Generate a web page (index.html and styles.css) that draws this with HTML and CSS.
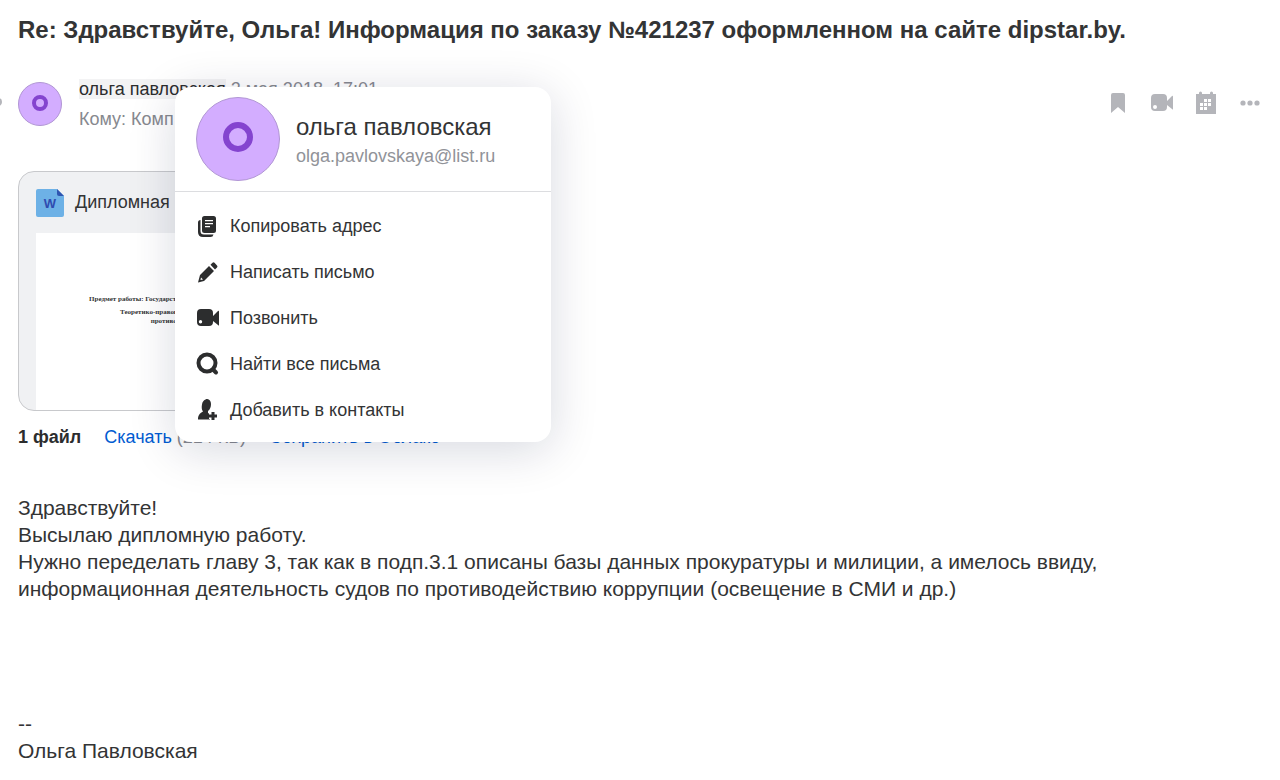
FILE: index.html
```html
<!DOCTYPE html>
<html lang="ru">
<head>
    <meta charset="UTF-8">
    <meta name="viewport" content="width=device-width, initial-scale=1.0">
    <title>Письмо</title>
    <link rel="stylesheet" href="styles.css">
</head>
<body>
    <main class="letter">
        <h1>Re: Здравствуйте, Ольга! Информация по заказу №421237 оформленном на сайте dipstar.by.</h1>

        <header class="letter-head">
            <span class="read-dot"></span>
            <div class="avatar">
                <svg viewBox="0 0 42 42"><circle cx="21" cy="20" r="6"/></svg>
            </div>
            <div class="people">
                <div class="from"><a class="sender" href="#">ольга павловская</a> <time>2 мая 2018, 17:01</time></div>
                <div class="to">Кому: Комп</div>
            </div>
            <div class="tools">
                <button type="button" aria-label="Закладка">
                    <svg viewBox="0 0 24 24"><path d="M5 4a2 2 0 0 1 2-2h10a2 2 0 0 1 2 2v18l-7-6-7 6z"/></svg>
                </button>
                <button type="button" aria-label="Звонок">
                    <svg viewBox="0 0 24 24"><path fill-rule="evenodd" d="M5 3h8q4 0 4 4v3l5-5q1-1 1 1v12q0 1-1 0l-5-4v2q0 4-4 4H5q-4 0-4-4V7q0-4 4-4zM5 14a2 2 0 1 0 0 4 2 2 0 0 0 0-4z"/></svg>
                </button>
                <button type="button" aria-label="Календарь">
                    <svg viewBox="0 0 24 24"><path fill-rule="evenodd" d="M2 3h3V2a1.500 1.500 0 0 1 3 0v1h8V2a1.500 1.500 0 0 1 3 0v1h3v20H2zM14 8v3h3V8zM10 8v3h3V8zM6 12v3h3v-3zM10 12v3h3v-3zM14 12v3h3v-3zM6 16v3h3v-3zM10 16v3h3v-3z"/></svg>
                </button>
                <button type="button" aria-label="Ещё">
                    <svg viewBox="0 0 24 24"><circle cx="5" cy="12" r="2.600"/><circle cx="12" cy="12" r="2.600"/><circle cx="19" cy="12" r="2.600"/></svg>
                </button>
            </div>

            <div class="popup">
                <div class="contact">
                    <div class="avatar avatar-big">
                        <svg viewBox="0 0 82 82"><circle cx="41" cy="39" r="12"/></svg>
                    </div>
                    <div class="contact-info">
                        <div class="contact-name">ольга павловская</div>
                        <div class="contact-mail">olga.pavlovskaya@list.ru</div>
                    </div>
                </div>
                <div class="menu">
                    <button type="button">
                        <svg viewBox="0 0 24 24"><path fill-rule="evenodd" d="M8.500 2h9q2.500 0 2.500 2.500v12q0 2.500-2.500 2.500h-9Q6 19 6 16.500v-12Q6 2 8.500 2zM9 6v1.300h8V6zM9 9v1.300h8V9zM9 12v1.300h5V12z"/><path d="M4.500 6v11q0 3.500 3.500 3.500h9.500Q17 23 14.500 23H7q-5 0-5-5V8.500Q2 6 4.500 6z"/></svg>
                        Копировать адрес
                    </button>
                    <button type="button">
                        <svg viewBox="0 0 24 24"><path fill-rule="evenodd" d="M13 6l5 5L8 21l-6 1.500 2-7.500zM5 17.500L4.500 20l2.500-.6z"/><path d="M14.500 4.800l2-2q1-1 2 0L21 5.500q1 1 0 2l-2 2z"/></svg>
                        Написать письмо
                    </button>
                    <button type="button">
                        <svg viewBox="0 0 24 24"><path fill-rule="evenodd" d="M5 3h8q4 0 4 4v3l5-5q1-1 1 1v13q0 1-1 0l-5-4v1q0 4-4 4H5q-4 0-4-4V7q0-4 4-4zM4.500 14a1.700 1.700 0 1 0 0 3.400 1.700 1.700 0 0 0 0-3.400z"/></svg>
                        Позвонить
                    </button>
                    <button type="button">
                        <svg viewBox="0 0 24 24"><circle class="line" cx="11" cy="11" r="8.500"/><path class="line" d="M17 17.500l3 3"/></svg>
                        Найти все письма
                    </button>
                    <button type="button">
                        <svg viewBox="0 0 24 24"><path d="M9.500 1.500C12.500 0 15 2.500 15 6c0 3-1 5.500-3 7v2l2 1v5.500H2c0-4 1.500-6 5-8C5.500 11.500 5.500 9 6 6.500c.3-2.500 1.500-4 3.500-5z"/><path class="halo" d="M17 14v8M13 18h8"/><path class="plus" d="M17 14v8M13 18h8"/></svg>
                        Добавить в контакты
                    </button>
                </div>
            </div>
        </header>

        <section class="files">
            <div class="file">
                <div class="file-name">
                    <svg viewBox="0 0 28 28"><path fill="#6db1e6" d="M2 0h19l7 7v19a2 2 0 0 1-2 2H2a2 2 0 0 1-2-2V2a2 2 0 0 1 2-2z"/><path fill="#2f55b0" d="M21 0l7 7h-5q-2 0-2-2z"/><text x="14" y="19">W</text></svg>
                    Дипломная
                </div>
                <div class="preview">
                    <p class="preview-first">Предмет работы: Государственная служба и управление</p>
                    <p>Теоретико-правовые основы работы</p>
                    <p>противодействия</p>
                </div>
            </div>
            <div class="file-links">
                <b>1 файл</b>
                <span><a href="#">Скачать</a> (214 КБ)</span>
                <a href="#">Сохранить в Облако</a>
            </div>
        </section>

        <article class="text">
            <p>Здравствуйте!</p>
            <p>Высылаю дипломную работу.</p>
            <p>Нужно переделать главу 3, так как в подп.3.1 описаны базы данных прокуратуры и милиции, а имелось ввиду, информационная деятельность судов по противодействию коррупции (освещение в СМИ и др.)</p>
            <p class="signature">--<br>Ольга Павловская</p>
        </article>
    </main>
</body>
</html>
```
FILE: styles.css
```css
* {
    box-sizing: border-box;
}

body {
    margin: 0;
    font-family: "Liberation Sans", Arial, sans-serif;
    font-size: 18px;
    color: #333435;
    background-color: #fff;
}

h1, p {
    margin: 0;
}

h1 {
    font-size: 24px;
    line-height: 28px;
}

a {
    color: #005bd1;
    text-decoration: none;
}

button {
    border: none;
    padding: 0;
    background: none;
    font: inherit;
    color: inherit;
    cursor: pointer;
}

.letter {
    padding: 16px 18px;
}

.letter-head {
    position: relative;
    display: flex;
    align-items: flex-start;
    margin-top: 34px;
    padding-top: 4px;
}

.read-dot {
    position: absolute;
    left: -24px;
    top: 20px;
    width: 8px;
    height: 8px;
    border-radius: 50%;
    background-color: #b4b5ba;
}

.avatar {
    flex: none;
    width: 44px;
    height: 44px;
    border: 1px solid #b196d4;
    border-radius: 50%;
    background-color: #d3adff;
}

.avatar svg {
    display: block;
    width: 100%;
    height: 100%;
    fill: none;
    stroke: #8444cf;
    stroke-width: 4;
}

.people {
    flex: 1;
    margin-left: 17px;
    margin-top: -3px;
    line-height: 20px;
    color: #87898f;
}

.sender {
    display: inline-block;
    color: #2c2d2e;
    background-color: #f3f3f4;
}

.to {
    margin-top: 10px;
}

.tools {
    display: flex;
    gap: 20px;
    margin-top: 9px;
}

.tools svg {
    display: block;
    width: 24px;
    height: 24px;
    fill: #b4b5ba;
}

/* contact popup */
.popup {
    position: absolute;
    z-index: 1;
    left: 157px;
    top: 9px;
    width: 376px;
    border-radius: 16px;
    background-color: #fff;
    box-shadow: 0 8px 48px rgba(0, 16, 61, 0.16);
}

.contact {
    display: flex;
    align-items: center;
    gap: 16px;
    padding: 10px 21px;
    border-bottom: 1px solid #dcdde0;
}

.contact-info {
    padding-top: 4px;
}

.avatar-big {
    width: 84px;
    height: 84px;
}

.avatar-big svg {
    stroke-width: 6;
}

.contact-name {
    font-size: 24px;
    line-height: 30px;
}

.contact-mail {
    line-height: 28px;
    color: #919399;
}

.menu {
    padding: 11px 0 9px;
}

.menu button {
    display: flex;
    align-items: center;
    gap: 10px;
    width: 100%;
    height: 46px;
    padding: 0 21px;
}

.menu svg {
    width: 24px;
    height: 24px;
    fill: #2c2d2e;
}

.menu .line,
.menu .plus,
.menu .halo {
    fill: none;
    stroke: #2c2d2e;
    stroke-width: 3;
}

.menu .line {
    stroke-width: 4;
    stroke-linecap: round;
}

.menu .halo {
    stroke: #fff;
    stroke-width: 6;
}

/* attachments */
.files {
    margin-top: 42px;
}

.file {
    width: 320px;
    height: 240px;
    padding: 0 17px;
    border: 1px solid #c8c9cc;
    border-radius: 16px;
    background-color: #f0f1f3;
    overflow: hidden;
}

.file-name {
    display: flex;
    align-items: center;
    gap: 11px;
    height: 61px;
}

.file-name svg {
    width: 28px;
    height: 28px;
}

.file-name text {
    font-family: "Liberation Sans", Arial, sans-serif;
    font-size: 13px;
    font-weight: bold;
    text-anchor: middle;
    fill: #2f4bb0;
}

.preview {
    height: 178px;
    padding-top: 62px;
    background-color: #fff;
    font-family: "Liberation Serif", serif;
    font-size: 7px;
    font-weight: bold;
    line-height: 9px;
    text-align: center;
    white-space: nowrap;
}

.preview-first {
    margin-bottom: 4px;
}

.file-links {
    display: flex;
    gap: 23px;
    margin-top: 15px;
    line-height: 22px;
    color: #87898f;
}

.file-links b {
    color: #2c2d2e;
}

/* message */
.text {
    margin-top: 46px;
    font-size: 21px;
    line-height: 27px;
}

.signature {
    margin-top: 108px;
}
```
